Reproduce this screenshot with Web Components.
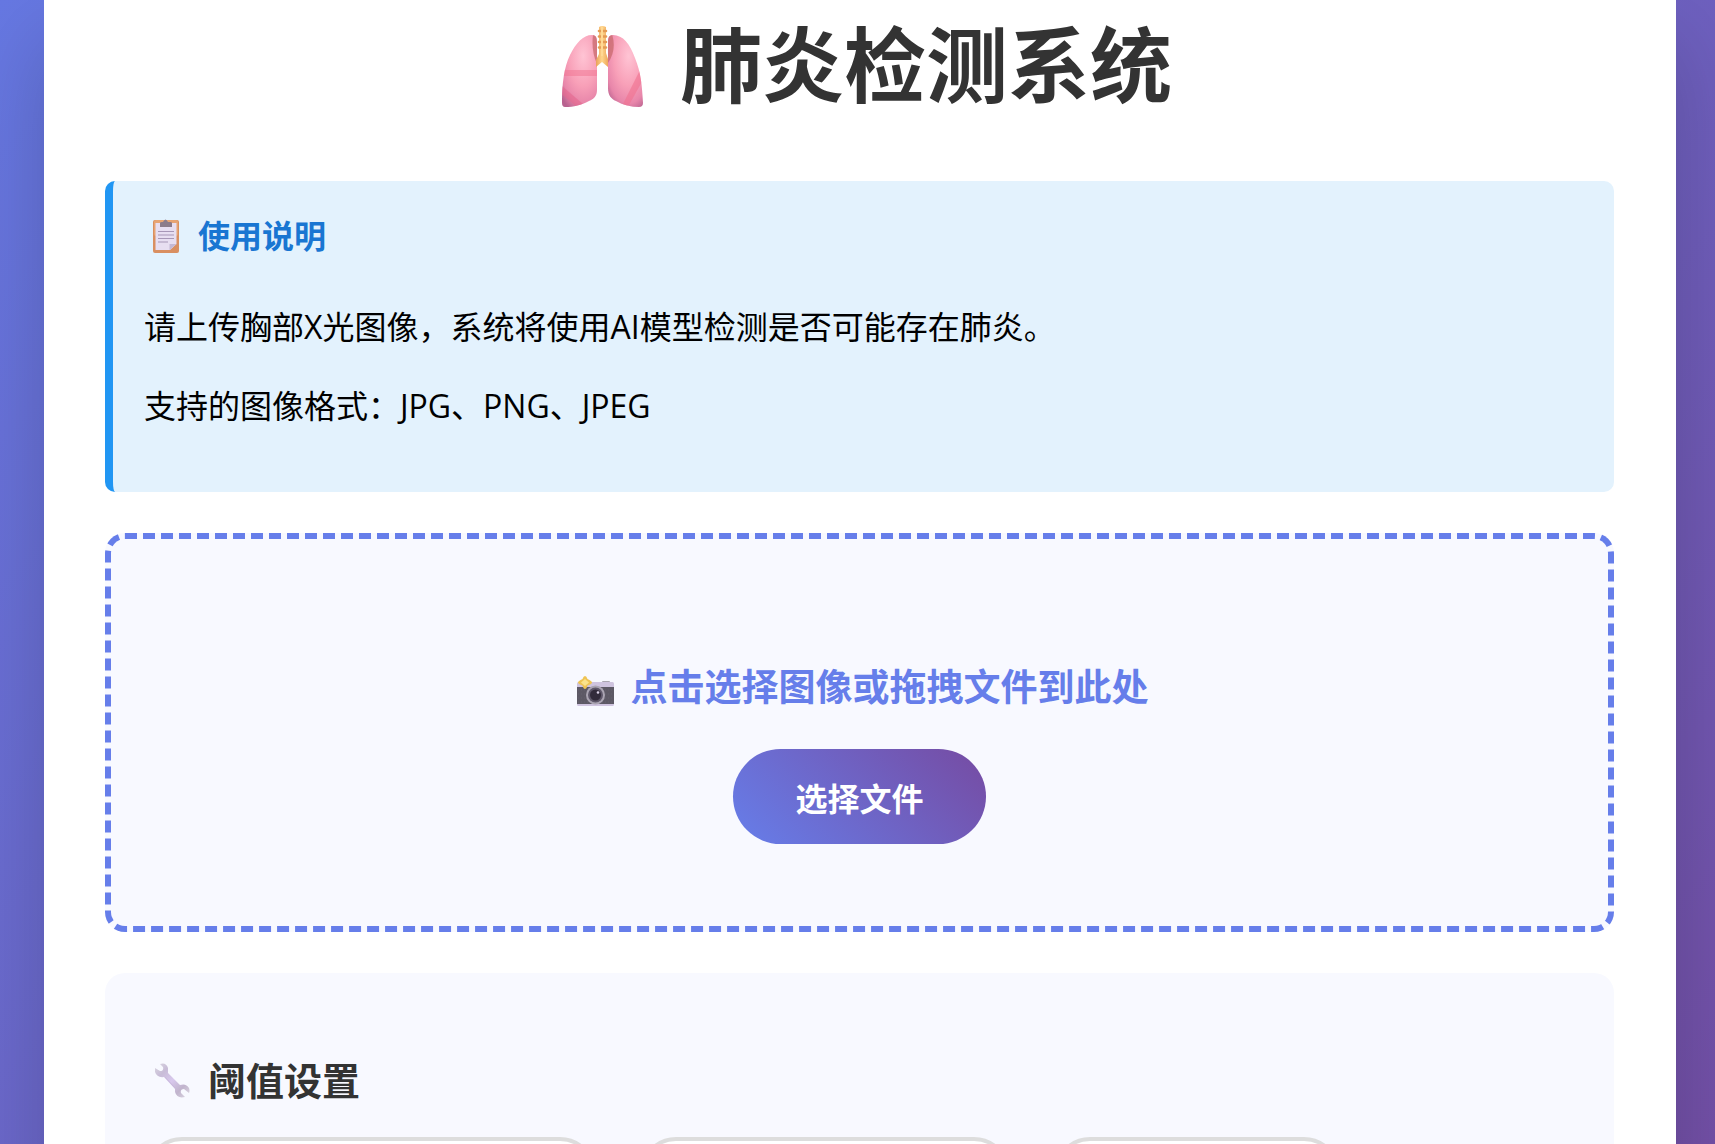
<!DOCTYPE html>
<html lang="zh-CN">
<head>
<meta charset="UTF-8">
<meta name="viewport" content="width=device-width, initial-scale=1.0">
<title>肺炎检测系统</title>
<style>
    body {
        margin: 0;
        font-family: "Open Sans", "Noto Sans CJK SC", sans-serif;
        font-size: 32px;
        color: #000;
    }
</style>
</head>
<body>
<detection-app></detection-app>

<script>
const ICONS = {
    lungs: `
        <svg viewBox="0 -6 82 88">
            <defs>
                <radialGradient id="lobe" cx=".6" cy=".3" r=".8">
                    <stop offset="0" stop-color="#ffc4d4"/>
                    <stop offset=".5" stop-color="#f8a0b8"/>
                    <stop offset=".8" stop-color="#e886aa"/>
                    <stop offset="1" stop-color="#b8628f"/>
                </radialGradient>
                <linearGradient id="pipe">
                    <stop offset="0" stop-color="#e9a05a"/>
                    <stop offset=".5" stop-color="#ffd68a"/>
                    <stop offset="1" stop-color="#eea75c"/>
                </linearGradient>
                <clipPath id="left"><path d="M31 9C36 9 36 13 36 18V64C36 70 33 73 28 75C20 79 13 81 4 81Q1 81 1 77C1 58 3 41 9 29C15 17 22 9 31 9Z"/></clipPath>
                <clipPath id="right"><path d="M52 9C47 9 47 13 47 18V62C47 69 50 73 55 75C62 79 70 81 78 81Q82 81 82 77C81 59 80 47 74 32C69 18 62 9 52 9Z"/></clipPath>
            </defs>
            <g clip-path="url(#left)">
                <path fill="url(#lobe)" d="M0 8H37V82H0Z"/>
                <path fill="#f0728f" opacity=".5" d="M0 44H36V50H0Z"/>
                <path fill="#e4688d" opacity=".6" d="M1 60L22 78L17 82L-2 66Z"/>
                <path fill="#c86a6c" opacity=".75" d="M32 9Q30 25 36 38V8Z"/>
            </g>
            <g clip-path="url(#right)">
                <path fill="url(#lobe)" d="M46 8H82V82H46Z"/>
                <path fill="#f0728f" opacity=".6" d="M79 44L82 54L68 79L60 82Z"/>
                <path fill="#c86a6c" opacity=".75" d="M47 8H51Q56 24 47 37Z"/>
            </g>
            <path fill="url(#pipe)" d="M38 1Q41 -1 45 1V27L47 33V41L41 36L35 41V34L38 28Z"/>
            <path stroke="#e59b55" stroke-width="2.6" stroke-linecap="round" d="M38 5H45M38 10.500H45M38 16H45M38 21.500H45"/>
            <path stroke="#ffd994" stroke-width="2" d="M41 1V30"/>
        </svg>`,
    clipboard: `
        <svg viewBox="0 0 26 34">
            <rect y="1" width="26" height="33" rx="2" fill="#d98f61"/>
            <rect x="1" y="1" width="24" height="16" rx="2" fill="#e7a473"/>
            <path fill="#e7def1" d="M2.500 4H23.500V25L17 31H2.500Z"/>
            <path fill="#c4b8d4" d="M16.500 25H23.500L16.500 31Z"/>
            <path fill="#8b7b8a" d="M7 4Q7 3 9 3H10Q12.500 -2 15 3H17Q19 3 19 4V8H7Z"/>
            <path stroke="#a797b7" d="M5 12.500H21M5 16H21M5 19.500H21M5 23H15"/>
        </svg>`,
    camera: `
        <svg viewBox="0 -7 37 37">
            <rect x="25" y="5" width="8" height="3" rx="1" fill="#aaa6b0"/>
            <rect y="6" width="37" height="24" rx="1.500" fill="#cfc4df"/>
            <rect y="11" width="37" height="17" fill="#5d5965"/>
            <path stroke="#777280" stroke-dasharray="1 2" d="M1 14H36M1 18H36M1 22H36M1 26H36" opacity=".4"/>
            <circle cx="18.500" cy="19" r="9.500" fill="#aaa4b2"/>
            <circle cx="18.500" cy="19" r="7.500" fill="#5e5769"/>
            <circle cx="18.500" cy="19" r="5.500" fill="#322b3b"/>
            <circle cx="21" cy="16.500" r="1.300" fill="#d9cfe4"/>
            <path fill="#efc454" d="M8 0Q9.500 0 10.500 3Q15 5 15 6.500Q15 8 10.500 9.500Q9.500 13 8 13Q6.500 13 5.500 9.500Q1 8 1 6.500Q1 5 5.500 3Q6.500 0 8 0Z"/>
            <path fill="#fbe38c" d="M8 3L12 6.500L8 10L4 6.500Z"/>
        </svg>`,
    wrench: `
        <svg viewBox="0 0 35 35">
            <defs>
                <linearGradient id="steel" x1="0" y1="0" x2="1" y2="1">
                    <stop offset="0" stop-color="#dcd9e2"/>
                    <stop offset=".25" stop-color="#c8bcd7"/>
                    <stop offset=".5" stop-color="#d8c8ed"/>
                    <stop offset=".75" stop-color="#c1b4cd"/>
                    <stop offset="1" stop-color="#dedae3"/>
                </linearGradient>
            </defs>
            <path fill="url(#steel)" d="M5 1Q11 -1 13 5V10L25 22Q31 20 34 25Q35 28 34 30L29 26Q25 26 26 30L30 34Q22 36 20 29V26L9 14Q2 15 0 9V5L5 8Q9 8 8 4Z"/>
            <path stroke="#c9b8dc" stroke-width="1" fill="none" d="M10 14L20 25"/>
        </svg>`
};

// --box is the space an icon takes in its line, --glyph the width drawn
class EmojiIcon extends HTMLElement {
    constructor() {
        super();
        this._shadowRoot = this.attachShadow({mode: 'open'});
    }

    connectedCallback() {
        this._shadowRoot.innerHTML = `
            <style>
                :host {
                    display: flex;
                    flex: none;
                    align-items: center;
                    justify-content: center;
                    width: var(--box);
                }
                svg {
                    display: block;
                    width: var(--glyph);
                    height: auto;
                }
            </style>
            ${ICONS[this.getAttribute('name')]}
        `;
    }
}
window.customElements.define('emoji-icon', EmojiIcon);

class InfoPanel extends HTMLElement {
    constructor() {
        super();
        this._shadowRoot = this.attachShadow({mode: 'open'});
        this._shadowRoot.innerHTML = `
            <style>
                :host {
                    display: block;
                    padding: 30px 31px;
                    border-left: 8px solid #2196f3;
                    border-radius: 10px;
                    background: #e3f2fd;
                }
                h2 {
                    display: flex;
                    align-items: center;
                    gap: 10px;
                    margin: 0 0 43px;
                    font-size: 32px;
                    line-height: 50px;
                    color: #1976d2;
                }
                emoji-icon {
                    --box: 44px;
                    --glyph: 26px;
                }
                ::slotted(p) {
                    margin: 0 0 33px;
                    line-height: 46px;
                }
            </style>
            <h2><emoji-icon name="clipboard"></emoji-icon><slot name="title"></slot></h2>
            <slot></slot>
        `;
    }
}
window.customElements.define('info-panel', InfoPanel);

class UploadArea extends HTMLElement {
    constructor() {
        super();
        this._shadowRoot = this.attachShadow({mode: 'open'});
        this._shadowRoot.innerHTML = `
            <style>
                :host {
                    display: flex;
                    flex-direction: column;
                    align-items: center;
                    padding: 123px 41px 82px;
                    border: 6px dashed #667eea;
                    border-radius: 20px;
                    background: #f8f9ff;
                }
                .hint {
                    display: flex;
                    align-items: center;
                    gap: 10px;
                    margin-bottom: 37px;
                    font-size: 37px;
                    font-weight: bold;
                    line-height: 50px;
                    color: #667eea;
                }
                emoji-icon {
                    --box: 50px;
                    --glyph: 37px;
                }
                button {
                    padding: 4px 62px 0;
                    border: none;
                    border-radius: 51px;
                    background: linear-gradient(45deg, #667eea, #764ba2);
                    color: #fff;
                    font-family: inherit;
                    font-size: 32px;
                    font-weight: bold;
                    line-height: 91px;
                    cursor: pointer;
                }
            </style>
            <div class="hint"><emoji-icon name="camera"></emoji-icon><slot></slot></div>
            <button type="button">选择文件</button>
            <input type="file" accept="image/*" hidden>
        `;

        this.$file = this._shadowRoot.querySelector('input');
        this.$button = this._shadowRoot.querySelector('button');
        this.$button.addEventListener('click', () => this.$file.click());
    }
}
window.customElements.define('upload-area', UploadArea);

class ThresholdPanel extends HTMLElement {
    constructor() {
        super();
        this._shadowRoot = this.attachShadow({mode: 'open'});
        this._shadowRoot.innerHTML = `
            <style>
                :host {
                    display: block;
                    padding: 82px 41px;
                    border-radius: 20px;
                    background: #f8f9ff;
                }
                h2 {
                    display: flex;
                    align-items: center;
                    gap: 10px;
                    margin: 0 0 32px;
                    font-size: 38px;
                    line-height: 50px;
                    color: #333;
                }
                emoji-icon {
                    --box: 52px;
                    --glyph: 35px;
                }
                .options {
                    display: flex;
                    gap: 44px;
                }
                button {
                    flex: 0 1 var(--size);
                    height: 81px;
                    border: 4px solid #ddd;
                    border-radius: 36px;
                    background: #fff;
                    cursor: pointer;
                }
                .wide { --size: 450px; }
                .medium { --size: 370px; }
                .small { --size: 286px; }
            </style>
            <h2><emoji-icon name="wrench"></emoji-icon><slot></slot></h2>
            <div class="options">
                <button type="button" class="wide"></button>
                <button type="button" class="medium"></button>
                <button type="button" class="small"></button>
            </div>
        `;
    }
}
window.customElements.define('threshold-panel', ThresholdPanel);

class DetectionApp extends HTMLElement {
    constructor() {
        super();
        this._shadowRoot = this.attachShadow({mode: 'open'});
        this._shadowRoot.innerHTML = `
            <style>
                :host {
                    display: block;
                    box-sizing: border-box;
                    height: 100vh;
                    overflow: hidden;
                    padding: 0 39px 0 44px;
                    background: linear-gradient(135deg, #6678e2, #7350a7);
                }
                main {
                    display: flex;
                    flex-direction: column;
                    gap: 41px;
                    padding: 6px 62px 61px 61px;
                    background: #fff;
                    box-shadow: 0 40px 80px rgba(0, 0, 0, .18);
                }
                h1 {
                    display: flex;
                    align-items: center;
                    justify-content: center;
                    gap: 22px;
                    margin: 0 0 18px;
                    font-size: 82px;
                    line-height: 116px;
                    color: #333;
                }
                h1 emoji-icon {
                    --box: 111px;
                    --glyph: 82px;
                }
            </style>
            <main>
                <h1><emoji-icon name="lungs"></emoji-icon>肺炎检测系统</h1>
                <info-panel>
                    <span slot="title">使用说明</span>
                    <p>请上传胸部X光图像，系统将使用AI模型检测是否可能存在肺炎。</p>
                    <p>支持的图像格式：JPG、PNG、JPEG</p>
                </info-panel>
                <upload-area>点击选择图像或拖拽文件到此处</upload-area>
                <threshold-panel>阈值设置</threshold-panel>
            </main>
        `;
    }
}
window.customElements.define('detection-app', DetectionApp);
</script>
</body>
</html>
